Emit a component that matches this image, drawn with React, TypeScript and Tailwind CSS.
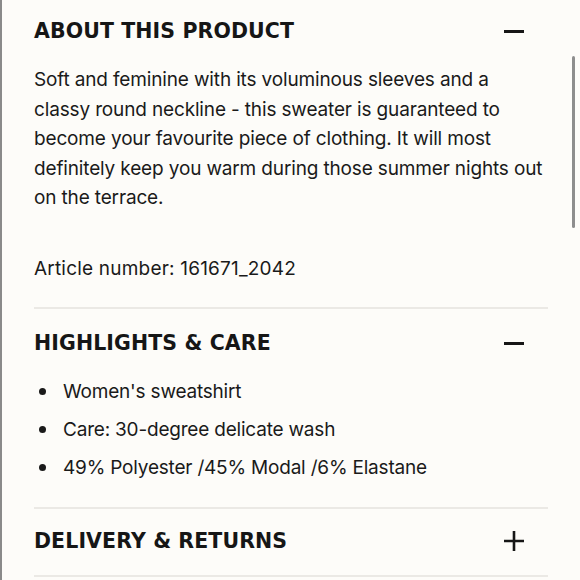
import React from "react";

const bodyFont = { fontFamily: 'Inter, "Liberation Sans", sans-serif' };
const headFont = { fontFamily: '"DejaVu Sans", sans-serif' };

function Minus() {
  return <span className="block w-[20px] h-[3px] bg-[#161616]" />;
}

function Plus() {
  return (
    <svg width="20" height="20" viewBox="0 0 20 20" className="block">
      <path d="M10 0v20M0 10h20" stroke="#161616" strokeWidth="2.6" />
    </svg>
  );
}

function SectionHead({ title, open }: { title: string; open: boolean }) {
  return (
    <div className="flex items-center justify-between pr-[24px]">
      <h2
        className="text-[20.5px] leading-[26px] font-bold text-[#161616] tracking-[0.1px]"
        style={headFont}
      >
        {title}
      </h2>
      {open ? <Minus /> : <Plus />}
    </div>
  );
}

const highlights = [
  "Women's sweatshirt",
  "Care: 30-degree delicate wash",
  "49% Polyester /45% Modal /6% Elastane",
];

export default function App() {
  return (
    <div className="relative w-[580px] h-[580px] overflow-hidden bg-[#fdfcf9] border-l-2 border-[#8a8a8a]">
      {/* scrollbar */}
      <div className="absolute right-[5px] top-[56px] h-[172px] w-[3px] rounded-full bg-[#8e8e8e]" />

      <div className="ml-[32px] w-[514px] text-[#1a1a1a]" style={bodyFont}>
        <section className="pt-[18px] pb-[24px] border-b-2 border-[#ebe9e5]">
          <SectionHead title="ABOUT THIS PRODUCT" open />
          <p className="mt-[21px] text-[19px] leading-[29.5px] tracking-[-0.15px] pr-[2px]">
            Soft and feminine with its voluminous sleeves and a classy round neckline - this
            sweater is guaranteed to become your favourite piece of clothing. It will most
            definitely keep you warm during those summer nights out on the terrace.
          </p>
          <p className="mt-[41px] text-[19px] leading-[29.5px] tracking-[0.2px]">Article number: 161671_2042</p>
        </section>

        <section className="pt-[21px] pb-[24px] border-b-2 border-[#ebe9e5]">
          <SectionHead title="HIGHLIGHTS & CARE" open />
          <ul className="mt-[21px] flex flex-col gap-[8.5px]">
            {highlights.map((h) => (
              <li key={h} className="flex items-center text-[19px] leading-[29.5px] tracking-[-0.2px]">
                <span className="ml-[5px] mr-[17px] w-[7px] h-[7px] rounded-full bg-[#1a1a1a]" />
                {h}
              </li>
            ))}
          </ul>
        </section>

        <section className="pt-[19px] pb-[21px] border-b-2 border-[#ebe9e5]">
          <SectionHead title="DELIVERY & RETURNS" open={false} />
        </section>
      </div>
    </div>
  );
}
